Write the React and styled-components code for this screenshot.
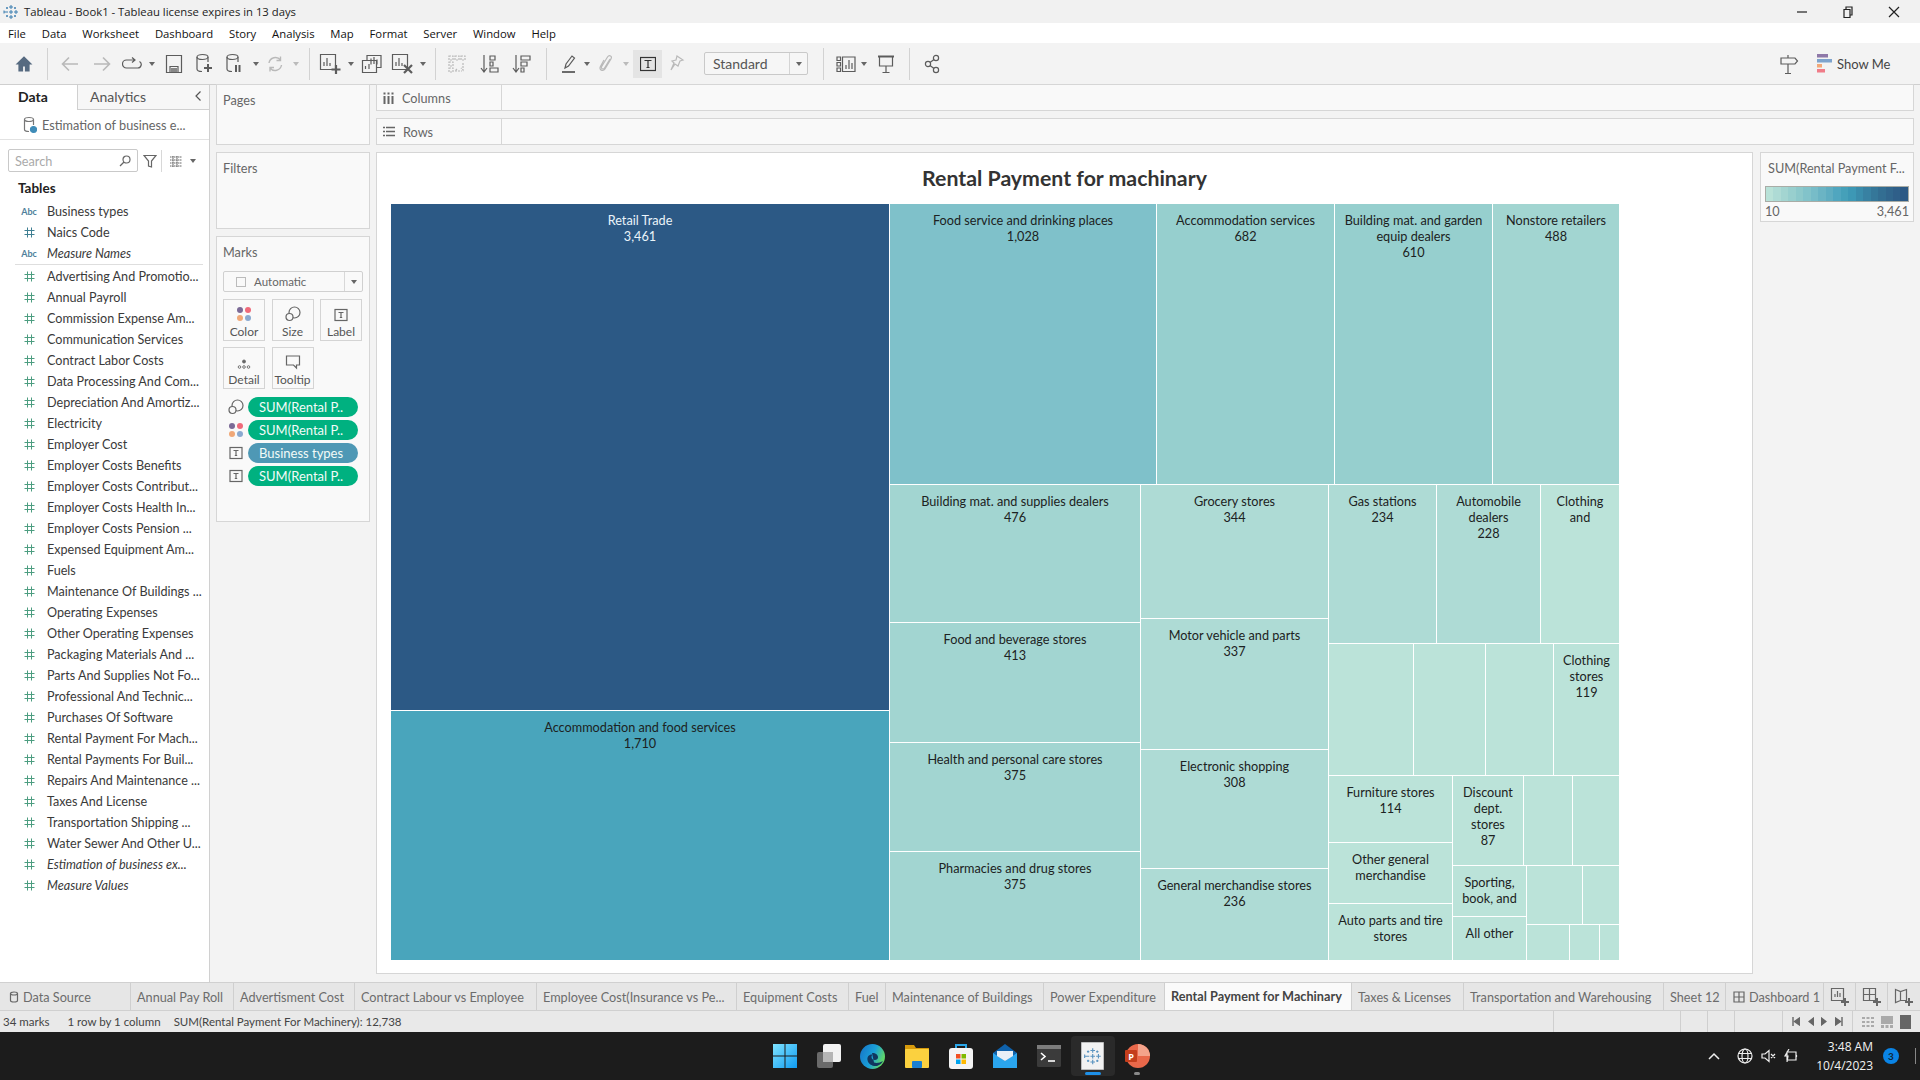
import React from "react";
import styled, { createGlobalStyle } from "styled-components";

const Global = createGlobalStyle`
  html, body { margin: 0; padding: 0; width: 1920px; height: 1080px; overflow: hidden; }
  body { font-family: "Lato", "Open Sans", sans-serif; font-size: 12.7px; color: #333; }
  * { box-sizing: border-box; }
`;

const Page = styled.div`
  width: 1920px;
  height: 1080px;
  display: flex;
  flex-direction: column;
  background: #f3f3f3;
`;

/* window chrome */
const TitleBar = styled.div`
  height: 23px;
  flex: none;
  display: flex;
  align-items: center;
  background: #f1f1f1;
  padding: 0 3px;
  font-family: "Open Sans", sans-serif;
  font-size: 11.3px;
  color: #222;
`;
const TitleText = styled.span`
  margin-left: 5px;
  flex: 1;
`;
const WinButton = styled.div`
  width: 46px;
  height: 23px;
  display: flex;
  align-items: center;
  justify-content: center;
  color: #222;
`;
const MenuBar = styled.div`
  height: 20px;
  flex: none;
  display: flex;
  align-items: center;
  background: #fff;
  padding-left: 8px;
  gap: 15.8px;
  font-family: "Open Sans", sans-serif;
  font-size: 11.3px;
  color: #111;
`;

/* toolbar */
const Toolbar = styled.div`
  height: 42px;
  flex: none;
  display: flex;
  align-items: center;
  background: #f3f3f3;
  border-bottom: 1px solid #cfcfcf;
`;
const ToolSlot = styled.div`
  flex: 0 0 ${(p) => p.$w}px;
  height: 28px;
  display: flex;
  align-items: center;
  justify-content: center;
  color: ${(p) => (p.$off ? "#b9b9b9" : "#5c5c5c")};
  background: ${(p) => (p.$on ? "#e4e4e4" : "transparent")};
`;
const ToolDivider = styled.div`
  flex: none;
  width: 1px;
  height: 32px;
  background: #d2d2d2;
`;
const Caret = styled.div`
  width: 0;
  height: 0;
  border-left: 3px solid transparent;
  border-right: 3px solid transparent;
  border-top: 4px solid ${(p) => (p.$off ? "#bbb" : "#666")};
`;
const StandardSelect = styled.div`
  flex: 0 0 104px;
  height: 23px;
  margin-left: 12px;
  display: flex;
  align-items: center;
  background: #f6f6f6;
  border: 1px solid #c9c9c9;
  border-radius: 2px;
  font-size: 14px;
  color: #555;
`;
const SelectLabel = styled.span`
  flex: 1;
  padding-left: 8px;
`;
const SelectArrow = styled.div`
  flex: 0 0 18px;
  height: 100%;
  border-left: 1px solid #d4d4d4;
  display: flex;
  align-items: center;
  justify-content: center;
`;
const ToolSpacer = styled.div`
  flex: 1;
`;
const ShowMe = styled.div`
  flex: 0 0 103px;
  margin-left: 17px;
  display: flex;
  align-items: center;
  gap: 5px;
  font-size: 13px;
  color: #444;
`;

/* body */
const Body = styled.div`
  flex: none;
  height: 897px;
  display: flex;
`;
const DataPanel = styled.div`
  flex: 0 0 210px;
  background: #fff;
  border-right: 1px solid #d0d0d0;
  display: flex;
  flex-direction: column;
`;
const PanelTabs = styled.div`
  height: 25px;
  flex: none;
  display: flex;
`;
const PanelTab = styled.div`
  width: ${(p) => (p.$active ? "77px" : "auto")};
  flex: ${(p) => (p.$active ? "none" : "1")};
  display: flex;
  align-items: center;
  justify-content: space-between;
  padding-left: ${(p) => (p.$active ? "18px" : "12px")};
  padding-right: 7px;
  padding-bottom: 2px;
  font-size: 14px;
  font-weight: ${(p) => (p.$active ? 700 : 400)};
  color: ${(p) => (p.$active ? "#222" : "#555")};
  background: ${(p) => (p.$active ? "#fff" : "#f7f7f7")};
  border-bottom: ${(p) => (p.$active ? "0" : "1px solid #d0d0d0")};
  border-left: ${(p) => (p.$active ? "0" : "1px solid #d0d0d0")};
`;
const SourceRow = styled.div`
  height: 30px;
  flex: none;
  display: flex;
  align-items: center;
  gap: 5px;
  padding-left: 23px;
  border-bottom: 1px solid #e2e2e2;
  color: #666;
`;
const SearchRow = styled.div`
  height: 23px;
  margin-top: 9px;
  flex: none;
  display: flex;
  align-items: center;
  padding-left: 8px;
  color: #666;
`;
const SearchBox = styled.div`
  flex: 0 0 130px;
  height: 23px;
  display: flex;
  align-items: center;
  justify-content: space-between;
  padding: 0 6px;
  border: 1px solid #c9c9c9;
  border-radius: 2px;
  color: #aaa;
`;
const SearchDivider = styled.div`
  width: 1px;
  height: 22px;
  margin: 0 7px 0 0;
  background: #d8d8d8;
`;
const TablesHead = styled.div`
  height: 22px;
  margin-top: 5px;
  flex: none;
  display: flex;
  align-items: center;
  padding-left: 18px;
  font-size: 13.5px;
  font-weight: 700;
  color: #222;
`;
const FieldList = styled.div`
  margin-top: 2px;
  display: flex;
  flex-direction: column;
  font-size: 12.6px;
`;
const FieldRow = styled.div`
  height: 21px;
  flex: none;
  display: flex;
  align-items: center;
  font-style: ${(p) => (p.$italic ? "italic" : "normal")};
  color: #3a3a3a;
  white-space: nowrap;
`;
const FieldIcon = styled.div`
  flex: 0 0 47px;
  display: flex;
  justify-content: center;
  padding-left: 11px;
  font-style: normal;
`;
const AbcTag = styled.span`
  font-size: 9px;
  font-weight: 700;
  color: #4f7f9b;
`;
const FieldRule = styled.div`
  height: 1px;
  margin: 0 6px 1px 15px;
  background: #dedede;
`;

/* cards column */
const SideColumn = styled.div`
  flex: 0 0 160px;
  margin-top: -1px;
  padding-left: 6px;
  display: flex;
  flex-direction: column;
  gap: 7px;
`;
const Card = styled.div`
  flex: 0 0 ${(p) => p.$h}px;
  background: #f9f9f9;
  border: 1px solid #d6d6d6;
  padding: 7px 6px;
  color: #666;
`;
const CardTitle = styled.div`
  line-height: 16px;
`;
const MarkSelect = styled.div`
  margin-top: 11px;
  height: 21px;
  display: flex;
  align-items: center;
  border: 1px solid #d0d0d0;
  border-radius: 2px;
  background: #f9f9f9;
  padding-left: 12px;
  font-size: 11.5px;
`;
const CheckBoxIcon = styled.div`
  width: 10px;
  height: 10px;
  margin-right: 8px;
  border: 1px solid #bbb;
`;
const MarkSelectArrow = styled.div`
  margin-left: auto;
  width: 18px;
  height: 100%;
  border-left: 1px solid #d8d8d8;
  display: flex;
  align-items: center;
  justify-content: center;
`;
const MarkGrid = styled.div`
  margin-top: 7px;
  display: grid;
  grid-template-columns: repeat(3, 42px);
  grid-auto-rows: 42px;
  column-gap: 6.5px;
  row-gap: 6px;
`;
const MarkButton = styled.div`
  border: 1px solid #d4d4d4;
  display: flex;
  flex-direction: column;
  align-items: center;
  justify-content: flex-end;
  gap: 2px;
  padding-bottom: 1px;
  font-size: 12px;
  color: #555;
`;
const PillList = styled.div`
  margin-top: 8px;
  display: flex;
  flex-direction: column;
  gap: 3px;
`;
const PillRow = styled.div`
  height: 20px;
  display: flex;
  align-items: center;
`;
const PillIcon = styled.div`
  flex: 0 0 25px;
  display: flex;
  justify-content: center;
`;
const Pill = styled.div`
  flex: 0 0 110px;
  height: 20px;
  line-height: 20px;
  padding-left: 11px;
  border-radius: 10px;
  background: ${(p) => p.$bg};
  color: #f2fbf8;
  font-size: 13px;
  white-space: nowrap;
`;

/* shelves and view */
const MainColumn = styled.div`
  flex: 0 0 1550px;
  margin-top: -1px;
  padding: 0 6px 8px 6px;
  display: flex;
  flex-direction: column;
  gap: 7px;
`;
const Shelf = styled.div`
  flex: 0 0 27px;
  display: flex;
  background: #f9f9f9;
  border: 1px solid #d6d6d6;
`;
const ShelfLabel = styled.div`
  flex: 0 0 125px;
  display: flex;
  align-items: center;
  gap: 8px;
  padding-left: 6px;
  border-right: 1px solid #d6d6d6;
  color: #666;
`;
const ViewRow = styled.div`
  flex: 1;
  display: flex;
  gap: 7px;
  min-height: 0;
`;
const View = styled.div`
  flex: 0 0 1377px;
  background: #fff;
  border: 1px solid #d6d6d6;
  padding-left: 14px;
  display: flex;
  flex-direction: column;
`;
const ViewTitle = styled.div`
  flex: 0 0 51px;
  padding: 0 14px 2px 0;
  display: flex;
  align-items: center;
  justify-content: center;
  font-size: 21.3px;
  font-weight: 700;
  color: #333;
`;
const Legend = styled.div`
  flex: 0 0 154px;
  height: 70px;
  background: #f9f9f9;
  border: 1px solid #d6d6d6;
  padding: 7px 4px;
  color: #666;
`;
const LegendTitle = styled.div`
  padding-left: 3px;
  line-height: 16px;
  white-space: nowrap;
`;
const LegendBar = styled.div`
  margin-top: 10px;
  height: 16px;
  display: flex;
  border: 1px solid #a9aca6;
`;
const LegendStep = styled.div`
  flex: 1;
  background: ${(p) => p.$c};
`;
const LegendScale = styled.div`
  display: flex;
  justify-content: space-between;
  line-height: 15px;
  margin-top: 2px;
`;

/* treemap */
const TreeGroup = styled.div`
  flex: 0 0 ${(p) => p.$size}px;
  display: flex;
  flex-direction: ${(p) => p.$dir};
  gap: 1px;
  min-width: 0;
  min-height: 0;
`;
const TreeRoot = styled.div`
  width: 1228px;
  height: 756px;
  display: flex;
  gap: 1px;
`;
const TreeCell = styled.div`
  flex: 0 0 ${(p) => p.$size}px;
  background: ${(p) => p.$c};
  color: ${(p) => (p.$dark ? "#eaf4fa" : "#1c2222")};
  padding-top: 8px;
  text-align: center;
  line-height: 16px;
  white-space: pre;
  overflow: hidden;
`;

/* tabs and status */
const TabStrip = styled.div`
  flex: none;
  height: 29px;
  display: flex;
  background: #e6e6e6;
  border-top: 1px solid #d0d0d0;
  border-bottom: 1px solid #d0d0d0;
`;
const SheetTab = styled.div`
  flex: 0 0 ${(p) => p.$w}px;
  display: flex;
  align-items: center;
  justify-content: flex-start;
  gap: 4px;
  padding-left: ${(p) => p.$pad ?? 6}px;
  padding-bottom: ${(p) => (p.$active ? "2px" : "0")};
  border-right: 1px solid #cfcfcf;
  background: ${(p) => (p.$active ? "#fafafa" : "#e6e6e6")};
  color: ${(p) => (p.$active ? "#444" : "#6c6c6c")};
  font-weight: ${(p) => (p.$active ? 700 : 400)};
  white-space: nowrap;
`;
const StatusBar = styled.div`
  flex: none;
  height: 21px;
  display: flex;
  align-items: center;
  background: #e9e9e9;
  color: #444;
  font-size: 11.5px;
`;
const StatusText = styled.span`
  margin-left: ${(p) => p.$ml}px;
  white-space: nowrap;
`;
const StatusCell = styled.div`
  flex: 0 0 ${(p) => p.$w}px;
  height: 21px;
  border-left: 1px solid #cfcfcf;
  display: flex;
  align-items: center;
  justify-content: space-around;
  padding: 0 5px;
`;

/* taskbar */
const Taskbar = styled.div`
  flex: none;
  height: 48px;
  background: #1c1c1c;
  display: grid;
  grid-template-columns: 1fr auto 1fr;
  align-items: center;
`;
const TaskIcons = styled.div`
  grid-column: 2;
  display: flex;
  margin-left: 1px;
`;
const TaskIcon = styled.div`
  position: relative;
  width: 44px;
  height: 40px;
  display: flex;
  align-items: center;
  justify-content: center;
  border-radius: 4px;
  background: ${(p) => (p.$on ? "#2a2a2a" : "transparent")};
`;
const TaskDot = styled.div`
  position: absolute;
  bottom: 1px;
  left: 50%;
  transform: translateX(-50%);
  width: ${(p) => (p.$wide ? "16px" : "6px")};
  height: 3px;
  border-radius: 2px;
  background: ${(p) => (p.$wide ? "#1e90e8" : "#8a8a8a")};
`;
const Tray = styled.div`
  grid-column: 3;
  display: flex;
  align-items: center;
  justify-content: flex-end;
  color: #eee;
`;
const TrayIcon = styled.div`
  flex: 0 0 ${(p) => p.$w}px;
  display: flex;
  justify-content: center;
`;
const Clock = styled.div`
  margin-left: 16px;
  text-align: right;
  font-family: "Open Sans", sans-serif;
  font-size: 12px;
  line-height: 19px;
  color: #f2f2f2;
`;
const Badge = styled.div`
  width: 16px;
  height: 16px;
  margin-left: 10px;
  border-radius: 50%;
  background: #0a84e6;
  color: #10263a;
  font-size: 10px;
  font-weight: 700;
  display: flex;
  align-items: center;
  justify-content: center;
`;
const TraySep = styled.div`
  width: 1px;
  height: 16px;
  margin: 0 4px 0 16px;
  background: #888;
`;

const Svg = ({ w = 20, h = 20, children, sw = 1.2, color = "currentColor" }) => (
  <svg width={w} height={h} viewBox={`0 0 ${w} ${h}`} fill="none" stroke={color} strokeWidth={sw}>
    {children}
  </svg>
);

const TableauMark = ({ size = 16, color = "#3d7fb0" }) => (
  <svg width={size} height={size} viewBox="0 0 16 16" stroke={color} strokeWidth="1" fill="none">
    <path d="M8 1v4M6 3h4M8 11v4M6 13h4M1 8h4M1 6.5v3M11 8h4M13 6v4M8 6v4M6 8h4M4 3v2M3 4h2M12 3v2M11 4h2M4 11v2M3 12h2M12 11v2M11 12h2" />
  </svg>
);

const FourDots = () => (
  <svg width="16" height="16" viewBox="0 0 16 16">
    <circle cx="4" cy="4" r="3" fill="#7b6a96" />
    <circle cx="12" cy="4" r="3" fill="#ef6a7a" />
    <circle cx="4" cy="12" r="3" fill="#f0a878" />
    <circle cx="12" cy="12" r="3" fill="#8aa9d0" />
  </svg>
);
const SizeIcon = () => (
  <Svg w={16} h={16} color="#666">
    <circle cx="9.5" cy="6.5" r="5.5" />
    <circle cx="4.5" cy="11" r="3.5" fill="#f9f9f9" />
  </Svg>
);
const TextIcon = () => (
  <Svg w={14} h={14} color="#666">
    <rect x="1" y="1.5" width="12" height="11" />
    <path d="M4.5 4.5h5M7 4.5v5M5.8 9.5h2.4" />
  </Svg>
);
const DetailIcon = () => (
  <Svg w={16} h={12} color="#666" sw={0.9}>
    <circle cx="8" cy="3.5" r="1.5" fill="#666" />
    <circle cx="3.5" cy="9" r="1.3" />
    <circle cx="8" cy="9" r="1.3" />
    <circle cx="12.5" cy="9" r="1.3" />
  </Svg>
);
const TooltipIcon = () => (
  <Svg w={16} h={16} color="#666">
    <path d="M1.5 2h13v9h-3v3l-3-3h-7z" />
  </Svg>
);
const HashIcon = ({ color = "#4c9d80" }) => (
  <Svg w={11} h={11} color={color} sw={1}>
    <path d="M3.5 0.5v10M7.5 0.5v10M0.5 3.5h10M0.5 7.5h10" />
  </Svg>
);
const DbIcon = ({ children, w = 20, h = 22 }) => (
  <Svg w={w} h={h}>
    <ellipse cx="7.5" cy="4" rx="5.5" ry="2.5" />
    <path d="M2 4v12c0 1.4 2 2.5 5 2.5M13 4v5" />
    {children}
  </Svg>
);

const toolbarItems = [
  { w: 47, el: <Svg><path d="M3 10l7-7 7 7h-2v7h-3.5v-5h-3v5H5v-7z" fill="#566a80" stroke="#566a80" /></Svg> },
  { div: true },
  { w: 6 },
  { w: 32, off: true, el: <Svg sw={1.6}><path d="M18 10H3M9 3.5L2.5 10 9 16.5" /></Svg> },
  { w: 32, off: true, el: <Svg sw={1.6}><path d="M2 10h15M11 3.5l6.5 6.5-6.5 6.5" /></Svg> },
  { w: 28, el: <Svg><path d="M13 6H4.5a3.5 3.5 0 0 0 0 8h11a3.5 3.5 0 0 0 2-6.5M10 3.5L13 6l-3 2.5" /></Svg> },
  { w: 12, caret: true },
  { w: 32, el: <Svg w={18} h={20}><path d="M1.5 1.5h15v17h-15zM5 18.5v-6h8v6" /><rect x="6" y="14" width="6" height="4" fill="#888" stroke="none" /></Svg> },
  { w: 30, el: <DbIcon><path d="M13 11v8M9 15h8" strokeWidth="2" /></DbIcon> },
  { w: 30, el: <DbIcon><path d="M11 12v7M14.5 12v7" strokeWidth="2" /></DbIcon> },
  { w: 12, caret: true },
  { w: 26, off: true, el: <Svg sw={1.4}><path d="M4 9a6.5 6.5 0 0 1 11.5-3M16.5 11A6.5 6.5 0 0 1 5 14M15.5 2.5v4h-4M5 17.5v-4h4" /></Svg> },
  { w: 16, caret: true, off: true },
  { w: 5 },
  { div: true },
  { w: 5 },
  { w: 30, el: <Svg w={22} h={22}><path d="M1.5 1.5h15v15h-15zM5 13V9M8 13V5M11 13v-3" /><path d="M17 12v9M12.5 16.5h9" strokeWidth="2.2" /></Svg> },
  { w: 12, caret: true },
  { w: 30, el: <Svg w={22} h={20}><path d="M6 6V1.5h14v12h-4" /><path d="M1.5 6.5h14v12h-14zM10 4.5v6M13 3v7M16 5.5v5M4.5 15v-3M8 15v-5" /></Svg> },
  { w: 30, el: <Svg w={22} h={22}><path d="M1.5 1.5h15v15h-15zM5 13V9M8 13V5M11 13v-3" /><path d="M13 12l8 8M21 12l-8 8" strokeWidth="2.2" /></Svg> },
  { w: 12, caret: true },
  { w: 6 },
  { div: true },
  { w: 6 },
  { w: 30, off: true, el: <Svg><path d="M2 2h4v4H2zM8 2h4v4H8zM14 2h4v4h-4zM2 8h4v4H2zM2 14h4v4H2zM16 9v7l-2-2M8 17h7M10 15l-2 2" strokeDasharray="2 1" /></Svg> },
  { w: 3 },
  { w: 30, el: <Svg><path d="M4 1v16M1 14l3 4 3-4" /><path d="M10 2h5v4h-5zM10 8h3v4h-3zM10 14h8v4h-8z" /></Svg> },
  { w: 2 },
  { w: 30, el: <Svg><path d="M4 1v16M1 14l3 4 3-4" /><path d="M9 2h9v4H9zM9 8h6v4H9zM9 14h3v4H9z" /></Svg> },
  { w: 9 },
  { div: true },
  { w: 7 },
  { w: 30, el: <Svg><path d="M6 14l1-4 6-8 2.5 2-6 8z" /><path d="M3 18h13" strokeWidth="1.8" /></Svg> },
  { w: 6, caret: true },
  { w: 2 },
  { w: 30, off: true, el: <Svg><path d="M13 5l-5.5 9c-1.2 2-4 .6-2.8-1.500L10.500 3c1.800-2.600 5-.7 3.600 1.600L8 15c-2 3-6.400.8-4.600-2.400L7 6" /></Svg> },
  { w: 8, caret: true, off: true },
  { w: 3 },
  { w: 29, on: true, el: <Svg w={16} h={16} color="#333"><rect x="0.5" y="1.5" width="15" height="13" /><path d="M4.5 4.5h7M8 4.5v7M6.5 11.5h3" /></Svg> },
  { w: 30, off: true, el: <Svg w={16} h={18}><path d="M8 1l6 4-3 1-2 5-3-2-4 6 3-7-2-2 4-1z" /></Svg> },
];

const fields = [
  ["Business types", "abc"],
  ["Naics Code", "dim"],
  ["Measure Names", "abc", true],
  "rule",
  "Advertising And Promotio...",
  "Annual Payroll",
  "Commission Expense Am...",
  "Communication Services",
  "Contract Labor Costs",
  "Data Processing And Com...",
  "Depreciation And Amortiz...",
  "Electricity",
  "Employer Cost",
  "Employer Costs Benefits",
  "Employer Costs Contribut...",
  "Employer Costs Health In...",
  "Employer Costs Pension ...",
  "Expensed Equipment Am...",
  "Fuels",
  "Maintenance Of Buildings ...",
  "Operating Expenses",
  "Other Operating Expenses",
  "Packaging Materials And ...",
  "Parts And Supplies Not Fo...",
  "Professional And Technic...",
  "Purchases Of Software",
  "Rental Payment For Mach...",
  "Rental Payments For Buil...",
  "Repairs And Maintenance ...",
  "Taxes And License",
  "Transportation Shipping ...",
  "Water Sewer And Other U...",
  ["Estimation of business ex...", "num", true],
  ["Measure Values", "num", true],
];

const legendColors = ["#b9e2d8", "#aedbd5", "#a3d5d1", "#98cfce", "#8dc9cb", "#82c3ca", "#77bcc8", "#6bb4c4", "#5fadc1", "#50a6bf", "#45a0b9", "#3d98b5", "#3a8cab", "#3881a2", "#357799", "#336e92", "#31668d", "#2f5f89", "#2c5985"];

const C = { a: "#bbe3d9", b: "#aedbd5", c: "#a2d5d1", d: "#96cfce", e: "#7fc1ca", f: "#49a5bc", g: "#2c5985" };
const leaf = (size, c, text, dark) => ({ size, c, text, dark });
const row = (size, ...kids) => ({ size, dir: "row", kids });
const col = (size, ...kids) => ({ size, dir: "column", kids });

const tree = [
  col(498, leaf(506, C.g, "Retail Trade\n3,461", true), leaf(249, C.f, "Accommodation and food services\n1,710")),
  col(729,
    row(280,
      leaf(266, C.e, "Food service and drinking places\n1,028"),
      leaf(177, C.d, "Accommodation services\n682"),
      leaf(157, C.d, "Building mat. and garden\nequip dealers\n610"),
      leaf(126, C.c, "Nonstore retailers\n488")),
    row(475,
      col(250,
        leaf(137, C.c, "Building mat. and supplies dealers\n476"),
        leaf(119, C.c, "Food and beverage stores\n413"),
        leaf(108, C.c, "Health and personal care stores\n375"),
        leaf(108, C.c, "Pharmacies and drug stores\n375")),
      col(187,
        leaf(133, C.b, "Grocery stores\n344"),
        leaf(130, C.b, "Motor vehicle and parts\n337"),
        leaf(118, C.b, "Electronic shopping\n308"),
        leaf(91, C.b, "General merchandise stores\n236")),
      col(290,
        row(158,
          leaf(107, C.b, "Gas stations\n234"),
          leaf(103, C.b, "Automobile\ndealers\n228"),
          leaf(78, C.a, "Clothing\nand")),
        row(131,
          leaf(84, C.a, ""),
          leaf(71, C.a, ""),
          leaf(67, C.a, ""),
          leaf(65, C.a, "Clothing\nstores\n119")),
        row(184,
          col(123,
            leaf(66, C.a, "Furniture stores\n114"),
            leaf(60, C.a, "Other general\nmerchandise"),
            leaf(56, C.a, "Auto parts and tire\nstores")),
          col(166,
            row(89,
              leaf(70, C.a, "Discount\ndept.\nstores\n87"),
              leaf(48, C.a, ""),
              leaf(46, C.a, "")),
            row(94,
              col(73,
                leaf(50, C.a, "Sporting,\nbook, and"),
                leaf(43, C.a, "All other")),
              col(92,
                row(58, leaf(55, C.a, ""), leaf(36, C.a, "")),
                row(35, leaf(42, C.a, ""), leaf(29, C.a, ""), leaf(19, C.a, "")))))))),
  ),
];

const TreeNode = ({ node }) =>
  node.kids ? (
    <TreeGroup $size={node.size} $dir={node.dir}>
      {node.kids.map((k, i) => <TreeNode key={i} node={k} />)}
    </TreeGroup>
  ) : (
    <TreeCell $size={node.size} $c={node.c} $dark={node.dark}>{node.text}</TreeCell>
  );

const sheetTabs = [
  ["Annual Pay Roll", 103], ["Advertisment Cost", 121], ["Contract Labour vs Employee", 182],
  ["Employee Cost(Insurance vs Pe...", 200], ["Equipment Costs", 112], ["Fuel", 37],
  ["Maintenance of Buildings", 158], ["Power Expenditure", 121], ["Rental Payment for Machinary", 187, true],
  ["Taxes & Licenses", 112], ["Transportation and Warehousing", 200], ["Sheet 12", 62],
];

const PlusBadgeIcon = ({ kind }) => (
  <Svg w={20} h={20} color="#666">
    {kind === "sheet" && <path d="M1.5 1.5h12v12h-12zM5 10V7M7.5 10V4M10 10V6" />}
    {kind === "dash" && <path d="M1.5 1.5h12v12h-12zM7.5 1.5v12M1.5 7.5h12" />}
    {kind === "story" && <path d="M1.5 2.5l5 2 6-2v11l-6 0-5 2z M6.5 4.5v9" />}
    <path d="M15 11v8M11 15h8" strokeWidth="2" />
  </Svg>
);

export default function App() {
  return (
    <Page>
      <Global />
      <TitleBar>
        <TableauMark size={16} />
        <TitleText>Tableau - Book1 - Tableau license expires in 13 days</TitleText>
        <WinButton><Svg w={12} h={12}><path d="M1 6h10" /></Svg></WinButton>
        <WinButton><Svg w={12} h={12}><path d="M2 3.5h6v8H2zM4 3.5V1h6v8H8" /></Svg></WinButton>
        <WinButton><Svg w={12} h={12}><path d="M1 1l10 10M11 1L1 11" /></Svg></WinButton>
      </TitleBar>
      <MenuBar>
        {["File", "Data", "Worksheet", "Dashboard", "Story", "Analysis", "Map", "Format", "Server", "Window", "Help"].map((m) => <span key={m}>{m}</span>)}
      </MenuBar>
      <Toolbar>
        {toolbarItems.map((t, i) =>
          t.div ? <ToolDivider key={i} /> : (
            <ToolSlot key={i} $w={t.w} $off={t.off} $on={t.on}>
              {t.caret ? <Caret $off={t.off} /> : t.el}
            </ToolSlot>
          )
        )}
        <StandardSelect>
          <SelectLabel>Standard</SelectLabel>
          <SelectArrow><Caret /></SelectArrow>
        </StandardSelect>
        <ToolSlot $w={15} />
        <ToolDivider />
        <ToolSlot $w={9} />
        <ToolSlot $w={26}><Svg w={20} h={20}><path d="M1 3h3.5v3.5H1zM1 8.5h3.5V12H1zM1 14h3.5v3.5H1zM6.5 3H19v14.5H6.5zM10 15v-4M13 15V6M16 15V9" /></Svg></ToolSlot>
        <ToolSlot $w={10}><Caret /></ToolSlot>
        <ToolSlot $w={34}><Svg w={18} h={20}><path d="M1 2.5h16" strokeWidth="2" /><path d="M2.5 3v9h13V3M9 12v6M5.5 18.5h7" /></Svg></ToolSlot>
        <ToolSlot $w={6} />
        <ToolDivider />
        <ToolSlot $w={44}><Svg w={16} h={20}><circle cx="12" cy="4" r="2.6" /><circle cx="4" cy="10" r="2.6" /><circle cx="12" cy="16" r="2.6" /><path d="M6 8.5l4-3M6 11.5l4 3" /></Svg></ToolSlot>
        <ToolSpacer />
        <ToolSlot $w={22}><Svg w={20} h={22}><path d="M2 5h14l2.5 3-2.5 3H2zM9 5V2M9 11v9M6 20.5h6" /></Svg></ToolSlot>
        <ShowMe>
          <svg width="15" height="19" viewBox="0 0 15 19">
            <rect x="0" y="0" width="11" height="3.5" fill="#8e78a8" />
            <rect x="0" y="5" width="15" height="3.5" fill="#7ea3cc" />
            <rect x="0" y="10" width="5" height="3.5" fill="#f2a878" />
            <rect x="0" y="15" width="8" height="3.5" fill="#f07c88" />
          </svg>
          Show Me
        </ShowMe>
      </Toolbar>

      <Body>
        <DataPanel>
          <PanelTabs>
            <PanelTab $active>Data</PanelTab>
            <PanelTab>
              Analytics
              <Svg w={8} h={12}><path d="M6.5 1.5L2 6l4.5 4.5" /></Svg>
            </PanelTab>
          </PanelTabs>
          <SourceRow>
            <Svg w={14} h={18} color="#777">
              <ellipse cx="6" cy="3.5" rx="4.5" ry="2" />
              <path d="M1.5 3.5v10c0 1.2 2 2 4.5 2M10.5 3.5V9" />
              <circle cx="10.5" cy="13.5" r="3" fill="#3f8cb8" stroke="#3f8cb8" />
            </Svg>
            <span>Estimation of business e...</span>
          </SourceRow>
          <SearchRow>
            <SearchBox>
              Search
              <Svg w={12} h={12} color="#666"><circle cx="7.5" cy="4.5" r="3.5" /><path d="M5 7l-4 4" /></Svg>
            </SearchBox>
            <ToolSlot $w={23}><Svg w={14} h={14} color="#666"><path d="M1 1.5h12L8.5 7v6L5.5 12V7z" /></Svg></ToolSlot>
            <SearchDivider />
            <Svg w={14} h={12} color="#666" sw={1}><path d="M1 2h12M1 5h12M1 8h12M1 11h12M4 1v11M8 1v11" strokeDasharray="1.5 .5" /></Svg>
            <ToolSlot $w={20}><Caret /></ToolSlot>
          </SearchRow>
          <TablesHead>Tables</TablesHead>
          <FieldList>
            {fields.map((f, i) => {
              if (f === "rule") return <FieldRule key={i} />;
              const [name, kind, italic] = Array.isArray(f) ? f : [f, "num", false];
              return (
                <FieldRow key={i} $italic={italic}>
                  <FieldIcon>
                    {kind === "abc" ? <AbcTag>Abc</AbcTag> : <HashIcon color={kind === "dim" ? "#3f7f92" : "#4c9d80"} />}
                  </FieldIcon>
                  {name}
                </FieldRow>
              );
            })}
          </FieldList>
        </DataPanel>

        <SideColumn>
          <Card $h={61}><CardTitle>Pages</CardTitle></Card>
          <Card $h={77}><CardTitle>Filters</CardTitle></Card>
          <Card $h={286}>
            <CardTitle>Marks</CardTitle>
            <MarkSelect>
              <CheckBoxIcon />
              Automatic
              <MarkSelectArrow><Caret /></MarkSelectArrow>
            </MarkSelect>
            <MarkGrid>
              <MarkButton><FourDots />Color</MarkButton>
              <MarkButton><SizeIcon />Size</MarkButton>
              <MarkButton><TextIcon />Label</MarkButton>
              <MarkButton><DetailIcon />Detail</MarkButton>
              <MarkButton><TooltipIcon />Tooltip</MarkButton>
            </MarkGrid>
            <PillList>
              <PillRow><PillIcon><SizeIcon /></PillIcon><Pill $bg="#00b180">SUM(Rental P..</Pill></PillRow>
              <PillRow><PillIcon><FourDots /></PillIcon><Pill $bg="#00b180">SUM(Rental P..</Pill></PillRow>
              <PillRow><PillIcon><TextIcon /></PillIcon><Pill $bg="#4e98b5">Business types</Pill></PillRow>
              <PillRow><PillIcon><TextIcon /></PillIcon><Pill $bg="#00b180">SUM(Rental P..</Pill></PillRow>
            </PillList>
          </Card>
        </SideColumn>

        <MainColumn>
          <Shelf>
            <ShelfLabel>
              <Svg w={11} h={12} color="#666" sw={2}><path d="M1.5 4v8M5.5 4v8M9.5 4v8M1.5 0.5v2M5.5 0.5v2M9.5 0.5v2" /></Svg>
              Columns
            </ShelfLabel>
          </Shelf>
          <Shelf>
            <ShelfLabel>
              <Svg w={12} h={11} color="#666" sw={1.6}><path d="M3 1.5h9M3 5.5h9M3 9.5h9M0 1.5h2M0 5.5h2M0 9.5h2" /></Svg>
              Rows
            </ShelfLabel>
          </Shelf>
          <ViewRow>
            <View>
              <ViewTitle>Rental Payment for machinary</ViewTitle>
              <TreeRoot>
                {tree.map((n, i) => <TreeNode key={i} node={n} />)}
              </TreeRoot>
            </View>
            <Legend>
              <LegendTitle>SUM(Rental Payment F...</LegendTitle>
              <LegendBar>
                {legendColors.map((c) => <LegendStep key={c} $c={c} />)}
              </LegendBar>
              <LegendScale><span>10</span><span>3,461</span></LegendScale>
            </Legend>
          </ViewRow>
        </MainColumn>
      </Body>

      <TabStrip>
        <SheetTab $w={131} $pad={9}>
          <Svg w={10} h={12} color="#666"><ellipse cx="5" cy="2.5" rx="3.5" ry="1.5" /><path d="M1.5 2.5v7c0 2 7 2 7 0v-7" /></Svg>
          Data Source
        </SheetTab>
        {sheetTabs.map(([name, w, active]) => <SheetTab key={name} $w={w} $active={active}>{name}</SheetTab>)}
        <SheetTab $w={98} $pad={7}>
          <Svg w={12} h={12} color="#666"><path d="M1 1h10v10H1zM6 1v10M1 6h10" /></Svg>
          Dashboard 1
        </SheetTab>
        <SheetTab $w={32}><PlusBadgeIcon kind="sheet" /></SheetTab>
        <SheetTab $w={32}><PlusBadgeIcon kind="dash" /></SheetTab>
        <SheetTab $w={33}><PlusBadgeIcon kind="story" /></SheetTab>
      </TabStrip>
      <StatusBar>
        <StatusText $ml={3}>34 marks</StatusText>
        <StatusText $ml={18}>1 row by 1 column</StatusText>
        <StatusText $ml={13}>SUM(Rental Payment For Machinery): 12,738</StatusText>
        <ToolSpacer />
        <StatusCell $w={127} />
        <StatusCell $w={27} />
        <StatusCell $w={27} />
        <StatusCell $w={48} />
        <StatusCell $w={70}>
          <Svg w={8} h={9} color="#666" sw={1.4}><path d="M1 0v9" /><path d="M7.5 1v7L2.5 4.5z" fill="#666" /></Svg>
          <Svg w={6} h={9} color="#666"><path d="M5.5 1v7L1 4.5z" fill="#666" /></Svg>
          <Svg w={6} h={9} color="#666"><path d="M.5 1v7L5 4.5z" fill="#666" /></Svg>
          <Svg w={8} h={9} color="#666" sw={1.4}><path d="M7 0v9" /><path d="M.5 1v7l5-3.5z" fill="#666" /></Svg>
        </StatusCell>
        <StatusCell $w={68}>
          <Svg w={12} h={12} color="#aaa" sw={2}><path d="M0 2h12M0 6h12M0 10h12" strokeDasharray="3 1.5" /></Svg>
          <svg width="12" height="12" viewBox="0 0 12 12"><rect width="12" height="8" fill="#aaa" /><rect y="9" width="3" height="3" fill="#aaa" /><rect x="4.5" y="9" width="3" height="3" fill="#aaa" /><rect x="9" y="9" width="3" height="3" fill="#aaa" /></svg>
          <svg width="11" height="14" viewBox="0 0 11 14"><rect width="11" height="14" fill="#666" /></svg>
        </StatusCell>
      </StatusBar>

      <Taskbar>
        <TaskIcons>
          <TaskIcon>
            <svg width="24" height="24" viewBox="0 0 24 24">
              <defs><linearGradient id="win" x1="0" y1="0" x2="1" y2="1"><stop offset="0" stopColor="#7fe3ff" /><stop offset="1" stopColor="#0f9bf2" /></linearGradient></defs>
              <path d="M0 0h11.5v11.5H0zM12.5 0H24v11.5H12.5zM0 12.5h11.5V24H0zM12.5 12.5H24V24H12.5z" fill="url(#win)" />
            </svg>
          </TaskIcon>
          <TaskIcon>
            <svg width="24" height="24" viewBox="0 0 24 24">
              <rect x="0" y="8" width="16" height="16" rx="2" fill="#6a6a6a" />
              <rect x="6" y="0" width="18" height="18" rx="2" fill="#f2f2f2" />
              <rect x="6" y="8" width="10" height="10" fill="#b5b5b5" />
            </svg>
          </TaskIcon>
          <TaskIcon>
            <svg width="25" height="25" viewBox="0 0 25 25">
              <defs><linearGradient id="edge" x1="0" y1="0" x2="1" y2="0.4"><stop offset="0" stopColor="#1672c7" /><stop offset="0.6" stopColor="#1aa0d8" /><stop offset="1" stopColor="#5fd66a" /></linearGradient></defs>
              <circle cx="12.5" cy="12.5" r="12.5" fill="url(#edge)" />
              <path d="M12 9c4 0 6 2 6 4.5 0 1.5-1.5 2.5-3 2.5-2 0-3.5-1-3.5-3 0-1 .5-2 1.5-2.5C9 10 7 12.5 7.5 16c.5 4 5 6.5 9.500 6 3-1 5-3 6-5-3 2-7 2.500-9 1.500" fill="#11365f" />
            </svg>
          </TaskIcon>
          <TaskIcon>
            <svg width="24" height="24" viewBox="0 0 24 24">
              <path d="M0 1h9l2 3h13v4H0z" fill="#d69a0c" />
              <rect y="5" width="24" height="19" rx="1" fill="#fbd13f" />
              <rect x="7" y="17" width="10" height="7" rx="1" fill="#1a7fd0" />
            </svg>
          </TaskIcon>
          <TaskIcon>
            <svg width="24" height="26" viewBox="0 0 24 26">
              <path d="M7 5V2h10v3" fill="none" stroke="#2aa6e8" strokeWidth="2" />
              <rect y="5" width="24" height="21" rx="3" fill="#f4f4f4" />
              <rect x="7" y="11" width="4.5" height="4.5" fill="#f25022" />
              <rect x="12.5" y="11" width="4.5" height="4.5" fill="#7fba00" />
              <rect x="7" y="16.5" width="4.5" height="4.5" fill="#00a4ef" />
              <rect x="12.5" y="16.5" width="4.5" height="4.5" fill="#ffb900" />
            </svg>
          </TaskIcon>
          <TaskIcon>
            <svg width="24" height="24" viewBox="0 0 24 24">
              <path d="M12 0l12 9v15H0V9z" fill="#0f62ac" />
              <path d="M0 9l12 8 12-8v15H0z" fill="#2aa5ee" />
              <path d="M4 7h16v5l-8 5-8-5z" fill="#fff" opacity=".9" />
            </svg>
          </TaskIcon>
          <TaskIcon>
            <svg width="24" height="22" viewBox="0 0 24 22">
              <rect width="24" height="22" rx="1.5" fill="#3b3b3b" />
              <rect width="24" height="4" fill="#7c7c7c" />
              <path d="M4 8l4 3.5-4 3.5" stroke="#fff" strokeWidth="1.6" fill="none" />
              <path d="M11 16h7" stroke="#fff" strokeWidth="1.6" />
            </svg>
          </TaskIcon>
          <TaskIcon $on>
            <svg width="23" height="28" viewBox="0 0 23 28">
              <rect width="23" height="28" fill="#f2f2f2" stroke="#888" />
              <g transform="translate(2.5 5) scale(1.15)"><TableauMark size={16} color="#5b94c0" /></g>
            </svg>
            <TaskDot $wide />
          </TaskIcon>
          <TaskIcon>
            <svg width="26" height="26" viewBox="0 0 26 26">
              <circle cx="14" cy="13" r="12" fill="#e9684a" />
              <path d="M14 13V1a12 12 0 0 1 12 12z" fill="#f4a38b" />
              <rect x="1" y="7" width="12" height="12" rx="1" fill="#c43e1c" />
              <text x="7" y="16.5" fontSize="9" fontWeight="700" fill="#fff" textAnchor="middle" fontFamily="Open Sans">P</text>
            </svg>
            <TaskDot />
          </TaskIcon>
        </TaskIcons>
        <Tray>
          <TrayIcon $w={36}><Svg w={12} h={8} sw={1.5}><path d="M1 7l5-5 5 5" /></Svg></TrayIcon>
          <TrayIcon $w={26}><Svg w={16} h={16}><circle cx="8" cy="8" r="7" /><ellipse cx="8" cy="8" rx="3" ry="7" /><path d="M1 5.5h14M1 10.5h14" /></Svg></TrayIcon>
          <TrayIcon $w={22}><Svg w={16} h={14}><path d="M1 5h3l4-3.5v11L4 9H1zM10 5l4 4M14 5l-4 4" /></Svg></TrayIcon>
          <TrayIcon $w={20}><Svg w={16} h={14}><path d="M5 3h9v8H5zM14.5 6v2M7 0L3 7h3l-1 6" /></Svg></TrayIcon>
          <Clock>3:48 AM<br />10/4/2023</Clock>
          <Badge>3</Badge>
          <TraySep />
        </Tray>
      </Taskbar>
    </Page>
  );
}
